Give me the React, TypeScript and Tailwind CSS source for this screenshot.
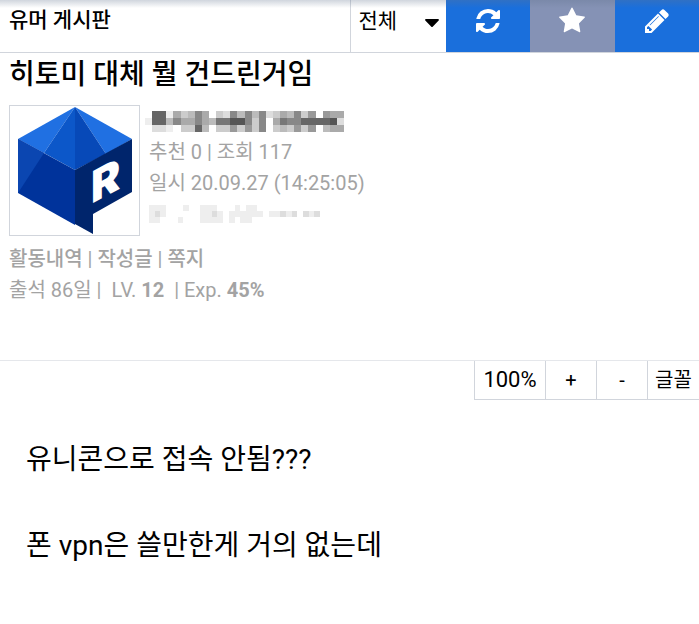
import { FaCaretDown } from "react-icons/fa";

// one hex digit per mosaic block, 0 = dark, f = white
const nameMosaic = [
  "f66eacb8afcd8b8b8dcab8c9f9aa",
  "e66b8aa8ab77558c8fa78866665da",
  "fddefcc6bfcc9c9c8fcbc9c9fbaa",
];

const ipMosaic = [
  "eeefffeffeeefffefeefffffffffff",
  "edeffffffeedefeeeeeefeededfded",
  "eefffefffeeeefefeeffffffffffff",
];

const icons = {
  refresh:
    "M1511 928q0 5-1 7-64 268-268 434.500t-478 166.500q-146 0-282.500-55t-243.500-157l-129 129q-19 19-45 19t-45-19-19-45v-448q0-26 19-45t45-19h448q26 0 45 19t19 45-19 45l-137 137q71 66 161 102t187 36q134 0 250-65t186-179q11-17 53-117 8-23 30-23h192q13 0 22.500 9.500t9.500 22.500zm25-800v448q0 26-19 45t-45 19h-448q-26 0-45-19t-19-45 19-45l138-138q-148-137-349-137-134 0-250 65t-186 179q-11 17-53 117-8 23-30 23h-199q-13 0-22.500-9.500t-9.500-22.500v-7q65-268 270-434.500t480-166.500q146 0 284 55.500t245 156.500l130-129q19-19 45-19t45 19 19 45z",
  star: "M1728 647q0 22-26 48l-363 354 86 500q1 7 1 20 0 21-10.500 35.500t-30.500 14.500q-19 0-40-12l-449-236-449 236q-22 12-40 12-21 0-31.500-14.500t-10.500-35.500q0-6 2-20l86-500-364-354q-25-27-25-48 0-37 56-46l502-73 225-455q19-41 49-41t49 41l225 455 502 73q56 9 56 46z",
  pencil:
    "M491 1536l91-91-235-235-91 91v107h128v128h107zm523-928q0-22-22-22-10 0-17 7l-542 542q-7 7-7 17 0 22 22 22 10 0 17-7l542-542q7-7 7-17zm-54-192l416 416-832 832h-416v-416zm683 96q0 53-37 90l-166 166-416-416 166-165q36-38 90-38 53 0 91 38l235 234q37 39 37 91z",
};

function Mosaic({ rows, className }: { rows: string[]; className: string }) {
  const cols = rows[0].length;
  return (
    <svg
      className={className}
      viewBox={`0 0 ${cols} ${rows.length}`}
      preserveAspectRatio="none"
      shapeRendering="crispEdges"
      aria-hidden="true"
    >
      {rows.map((row, y) =>
        row.slice(0, cols).split("").map((c, x) => (
          <rect key={`${x}-${y}`} x={x} y={y} width={1} height={1} fill={`#${c.repeat(6)}`} />
        ))
      )}
    </svg>
  );
}

function Avatar() {
  return (
    <svg viewBox="0 0 129 129" className="h-full w-full" role="img" aria-label="avatar">
      <path d="M65 1 8 33 34 47Z" fill="#2070e2" />
      <path d="M65 1 122 33 96 48Z" fill="#2070e2" />
      <path d="M65 1 34 47 65 64Z" fill="#0c57c9" />
      <path d="M65 1 96 48 65 64Z" fill="#0749b8" />
      <path d="M8 33 65 64V119L8 87Z" fill="#00339b" />
      <path d="M8 33 34 47 8 87Z" fill="#0b46b1" />
      <path d="M65 64 122 33V86L83 108V128L65 118Z" fill="#00256c" />
      <text
        transform="translate(81 98) skewY(-28)"
        className="font-['Inter'] text-[44px] font-black"
        fill="#fff"
      >
        R
      </text>
    </svg>
  );
}

export default function App() {
  return (
    <div className="min-h-screen bg-white font-['Roboto','Noto_Sans_CJK_KR',sans-serif] text-black">
      <header className="relative flex h-[53px] border-b border-gray-300">
        <h2 className="flex-1 px-[9px] pt-1 text-[21px] leading-8 font-medium">유머 게시판</h2>
        <div className="flex w-1/2">
          <div className="relative w-24 border-l border-gray-300">
            <select aria-label="분류" className="h-11 w-full appearance-none bg-transparent pl-2 text-[21px] outline-none">
              <option>전체</option>
            </select>
            <FaCaretDown className="pointer-events-none absolute top-2.5 right-1 h-6 w-5" />
          </div>
          <button aria-label="새로고침" className="flex flex-1 justify-center bg-[#1a6fdc] pt-[9px] text-white">
            <svg viewBox="0 0 1536 1536" className="size-6" fill="currentColor">
              <path d={icons.refresh} />
            </svg>
          </button>
          <button aria-label="즐겨찾기" className="flex flex-1 justify-center bg-[#8592b5] pt-[7px] text-white">
            <svg viewBox="0 0 1792 1792" className="size-7" fill="currentColor">
              <path d={icons.star} />
            </svg>
          </button>
          <button aria-label="글쓰기" className="flex flex-1 justify-center bg-[#1a6fdc] pt-[7px] text-white">
            <svg viewBox="0 0 1792 1792" className="size-7" fill="currentColor">
              <path d={icons.pencil} />
            </svg>
          </button>
        </div>
        <div className="pointer-events-none absolute inset-x-0 top-0 h-2 bg-linear-to-b from-slate-500/30 to-transparent" />
      </header>

      <section className="px-[9px] text-xl text-[#a3a3a3]">
        <h1 className="pt-1 text-[28px] leading-9 font-medium text-black">히토미 대체 뭘 건드린거임</h1>
        <div className="mt-3 flex gap-[9px]">
          <div className="size-[131px] shrink-0 border border-gray-300">
            <Avatar />
          </div>
          <div className="leading-[31px]">
            <div className="flex h-8 items-center">
              <Mosaic rows={nameMosaic} className="-ml-1 h-[21px] w-[199px]" />
            </div>
            <p>추천 0 | 조회 117</p>
            <p>일시 20.09.27 (14:25:05)</p>
            <div className="flex h-[30px] items-center">
              <Mosaic rows={ipMosaic} className="h-[18px] w-[171px]" />
            </div>
          </div>
        </div>
        <div className="mt-2 leading-[31px]">
          <p>
            <a href="#" className="font-medium">활동내역</a> | <a href="#" className="font-medium">작성글</a> |{" "}
            <a href="#" className="font-medium">쪽지</a>
          </p>
          <p>
            출석 86일 |&nbsp; LV. <b>12</b> &nbsp;| Exp. <b>45%</b>
          </p>
        </div>
      </section>

      <main className="mt-[54px] border-t border-gray-200">
        <div className="flex h-[39px] justify-end text-xl">
          <span className="flex w-[71px] items-center justify-center border-b border-l border-gray-300 text-[22px]">100%</span>
          <button className="w-[51px] border-b border-l border-gray-300">+</button>
          <button className="w-[51px] border-b border-l border-gray-300">-</button>
          <button className="w-[52px] border-b border-l border-gray-300">글꼴</button>
        </div>
        <div className="px-[26px] pt-[38px] text-[28px] leading-[43px]">
          <p>유니콘으로 접속 안됨???</p>
          <br />
          <p>폰 vpn은 쓸만한게 거의 없는데</p>
        </div>
      </main>
    </div>
  );
}
